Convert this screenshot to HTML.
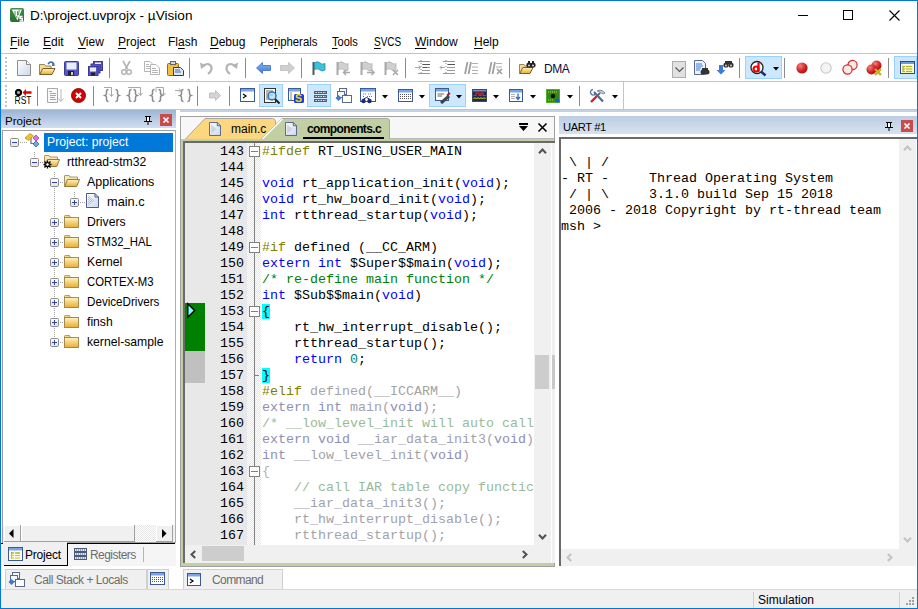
<!DOCTYPE html>
<html><head><meta charset="utf-8">
<style>
*{margin:0;padding:0;box-sizing:border-box}
html,body{width:918px;height:609px;overflow:hidden;background:#fff}
body{position:relative;font-family:"Liberation Sans",sans-serif;font-size:12px;color:#000}
.a{position:absolute}
.t{position:absolute;white-space:pre;line-height:14px}
.mono{font-family:"Liberation Mono",monospace;font-size:13.33px}
.u{text-decoration:underline;text-underline-offset:2px}
svg{position:absolute;overflow:visible}
</style></head><body>
<!-- window border -->
<div class="a" style="left:0;top:0;width:918px;height:609px;border:1px solid #0078d7;z-index:50;pointer-events:none"></div>

<!-- TITLE BAR -->
<div id="title">
  <svg style="left:10px;top:8px" width="14" height="14"><defs><linearGradient id="gic" x1="0" y1="0" x2="0" y2="1"><stop offset="0" stop-color="#3f8f48"/><stop offset="1" stop-color="#24702f"/></linearGradient></defs><rect x="0" y="0" width="14" height="14" rx="2" fill="url(#gic)"/><path d="M1.8 1.5H11.8L7.5 12.5Z" fill="#fff"/><path d="M5 3V8M7.5 3V7.5M6 8.5L7.5 9.5" stroke="#5a9a62" stroke-width="1.1"/><path d="M9.3 1.5L8.5 7" stroke="#4a8c52" stroke-width="0.9"/><path d="M12.5 8.5H10V10.5H12.2V13H9.6" fill="none" stroke="#fff" stroke-width="1.5"/></svg>
  <div class="t" style="left:30px;top:9px;font-size:13.6px">D:\project.uvprojx - µVision</div>
  <!-- min -->
  <div class="a" style="left:798px;top:15px;width:10px;height:1px;background:#000"></div>
  <div class="a" style="left:843px;top:10px;width:10px;height:10px;border:1px solid #000"></div>
  <svg style="left:889px;top:10px" width="11" height="11"><path d="M0.5 0.5L10.5 10.5M10.5 0.5L0.5 10.5" stroke="#000" stroke-width="1.1"/></svg>
</div>

<!-- MENU -->
<div id="menu">
  <div class="t" style="left:10px;top:35px"><span class="u">F</span>ile</div>
  <div class="t" style="left:43px;top:35px"><span class="u">E</span>dit</div>
  <div class="t" style="left:78px;top:35px"><span class="u">V</span>iew</div>
  <div class="t" style="left:118px;top:35px"><span class="u">P</span>roject</div>
  <div class="t" style="left:168px;top:35px">Fl<span class="u">a</span>sh</div>
  <div class="t" style="left:210px;top:35px"><span class="u">D</span>ebug</div>
  <div class="t" style="left:260px;top:35px;transform:scaleX(0.945);transform-origin:0 0">Pe<span class="u">r</span>ipherals</div>
  <div class="t" style="left:332px;top:35px;transform:scaleX(0.92);transform-origin:0 0"><span class="u">T</span>ools</div>
  <div class="t" style="left:374px;top:35px;transform:scaleX(0.83);transform-origin:0 0"><span class="u">S</span>VCS</div>
  <div class="t" style="left:415px;top:35px"><span class="u">W</span>indow</div>
  <div class="t" style="left:474px;top:35px"><span class="u">H</span>elp</div>
</div>

<!-- toolbar lines -->
<div class="a" style="left:0;top:53px;width:918px;height:1px;background:#c4c4c4"></div>
<div class="a" style="left:0;top:81px;width:918px;height:1px;background:#c4c4c4"></div>
<div class="a" style="left:623px;top:81px;width:1px;height:28px;background:#c4c4c4"></div>
<div class="a" style="left:0;top:109px;width:918px;height:1px;background:#c4c4c4"></div>

<!-- TB START -->
<div id="tb">
<div class="a" style="left:5px;top:57px;width:2px;height:2px;background:#c4c4c4"></div><div class="a" style="left:5px;top:61px;width:2px;height:2px;background:#c4c4c4"></div><div class="a" style="left:5px;top:65px;width:2px;height:2px;background:#c4c4c4"></div><div class="a" style="left:5px;top:69px;width:2px;height:2px;background:#c4c4c4"></div><div class="a" style="left:5px;top:73px;width:2px;height:2px;background:#c4c4c4"></div><div class="a" style="left:5px;top:77px;width:2px;height:2px;background:#c4c4c4"></div>
<div class="a" style="left:5px;top:85px;width:2px;height:2px;background:#c4c4c4"></div><div class="a" style="left:5px;top:89px;width:2px;height:2px;background:#c4c4c4"></div><div class="a" style="left:5px;top:93px;width:2px;height:2px;background:#c4c4c4"></div><div class="a" style="left:5px;top:97px;width:2px;height:2px;background:#c4c4c4"></div><div class="a" style="left:5px;top:101px;width:2px;height:2px;background:#c4c4c4"></div><div class="a" style="left:5px;top:105px;width:2px;height:2px;background:#c4c4c4"></div>
<svg style="left:17px;top:60px" width="14" height="16"><defs><linearGradient id="gpage" x1="0" y1="0" x2="1" y2="1"><stop offset="0" stop-color="#ffffff"/><stop offset="1" stop-color="#cdd6ee"/></linearGradient></defs><path d="M0.5 0.5H9.5L13.5 4.5V15.5H0.5Z" fill="url(#gpage)" stroke="#8c8c8c"/><path d="M9.5 0.5V4.5H13.5" fill="#fff" stroke="#8c8c8c"/></svg>
<svg style="left:39px;top:61px" width="17" height="15"><path d="M0.5 13.5V3.5H5.5L6.5 5H12V8" fill="#f3dc98" stroke="#9c8655"/><path d="M0.8 13.5L3.8 7.5H16L13 13.5Z" fill="url(#gfold)" stroke="#7b5f25"/><path d="M9 3Q12 -1 15 3" fill="none" stroke="#3469b5" stroke-width="1.5"/><path d="M13.5 1.5L16.5 4.5L13 5Z" fill="#3469b5"/></svg>
<svg style="left:64px;top:61px" width="15" height="15"><rect x="0.5" y="0.5" width="14" height="14" rx="1" fill="#5657c4" stroke="#3a3b96"/><rect x="2.5" y="1.5" width="10" height="7" fill="#e8eefa"/><rect x="4" y="10" width="6" height="4.5" fill="#222"/><rect x="7" y="11" width="2" height="3" fill="#ccc"/></svg>
<svg style="left:88px;top:61px" width="15" height="15"><rect x="5.5" y="0.5" width="9" height="9" fill="#5657c4" stroke="#3a3b96"/><rect x="3" y="3" width="9" height="9" fill="#5657c4" stroke="#3a3b96"/><rect x="0.5" y="5.5" width="9.5" height="9" fill="#5657c4" stroke="#3a3b96"/><rect x="2" y="6.5" width="6" height="4" fill="#e8eefa"/><rect x="3" y="11.5" width="4" height="3" fill="#222"/><rect x="7" y="1.5" width="6" height="1.5" fill="#e8eefa"/></svg>
<div class="a" style="left:109px;top:58px;width:1px;height:20px;background:#8c8c8c"></div>
<svg style="left:121px;top:61px" width="11" height="14"><path d="M2 0L6.5 8M9 0L4.5 8" stroke="#b4b4b4" stroke-width="1.6"/><circle cx="3" cy="11" r="2.3" fill="none" stroke="#b4b4b4" stroke-width="1.5"/><circle cx="8" cy="11" r="2.3" fill="none" stroke="#b4b4b4" stroke-width="1.5"/></svg>
<svg style="left:144px;top:61px" width="16" height="14"><path d="M0.5 0.5H6L8.5 3V10.5H0.5Z" fill="#fff" stroke="#b4b4b4"/><path d="M6.5 3.5H12L15.5 7V13.5H6.5Z" fill="#fff" stroke="#b4b4b4"/><path d="M2 3.5H5M2 5.5H6M2 7.5H6M8 7.5H12M8 9.5H14M8 11.5H14" stroke="#b4b4b4"/></svg>
<svg style="left:167px;top:61px" width="17" height="15"><rect x="0.5" y="2.5" width="11" height="12" rx="1" fill="#f0c040" stroke="#8a6a20"/><rect x="3.5" y="0.5" width="5" height="3" fill="#d8d8d8" stroke="#666"/><path d="M6.5 6.5H13.5L16.5 9.5V14.5H6.5Z" fill="#dfe6f3" stroke="#2d3c5c"/><path d="M8 9H13M8 11H14" stroke="#4a6aa8"/></svg>
<div class="a" style="left:189px;top:58px;width:1px;height:20px;background:#8c8c8c"></div>
<svg style="left:200px;top:61px" width="14" height="14"><path d="M3 5Q8 1 11 5Q13 9 8 13" fill="none" stroke="#b4b4b4" stroke-width="2.2"/><path d="M0 1.5L6 4.5L1 8Z" fill="#b4b4b4"/></svg>
<svg style="left:225px;top:61px" width="14" height="14"><path d="M10 5Q5 1 2 5Q0 9 5 13" fill="none" stroke="#b4b4b4" stroke-width="2.2"/><path d="M13 1.5L7 4.5L12 8Z" fill="#b4b4b4"/></svg>
<div class="a" style="left:245px;top:58px;width:1px;height:20px;background:#8c8c8c"></div>
<svg style="left:256px;top:62px" width="15" height="12"><defs><linearGradient id="gba" x1="0" y1="0" x2="0" y2="1"><stop offset="0" stop-color="#8ab4f2"/><stop offset="1" stop-color="#3c78d8"/></linearGradient></defs><path d="M0.5 6L6.5 0.5V3.5H14.5V8.5H6.5V11.5Z" fill="url(#gba)" stroke="#3a6fc8" stroke-width="0.8"/></svg>
<svg style="left:280px;top:62px" width="15" height="12"><path d="M14.5 6L8.5 0.5V3.5H0.5V8.5H8.5V11.5Z" fill="#cfcfcf" stroke="#bdbdbd" stroke-width="0.8"/></svg>
<div class="a" style="left:301px;top:58px;width:1px;height:20px;background:#8c8c8c"></div>
<svg style="left:312px;top:61px" width="14" height="15"><path d="M1.5 1V14" stroke="#555" stroke-width="2"/><path d="M2.5 1.5Q6 0 8 2Q10 4 13 2.5V9Q10 11 8 9Q6 7 2.5 8.5Z" fill="#3ec0d8" stroke="#1f8ea8" stroke-width="0.8"/></svg>
<svg style="left:336px;top:61px" width="16" height="15"><path d="M1.5 1V14" stroke="#a8a8a8" stroke-width="2"/><path d="M2.5 1.5Q6 0 8 2Q10 4 12 2.5V9Q10 11 8 9Q6 7 2.5 8.5Z" fill="#cfcfcf" stroke="#b0b0b0" stroke-width="0.8"/><path d="M14 11.5H8M10 9L7.5 11.5L10 14" fill="none" stroke="#a8a8a8" stroke-width="1.5"/></svg>
<svg style="left:360px;top:61px" width="16" height="15"><path d="M1.5 1V14" stroke="#a8a8a8" stroke-width="2"/><path d="M2.5 1.5Q6 0 8 2Q10 4 12 2.5V9Q10 11 8 9Q6 7 2.5 8.5Z" fill="#cfcfcf" stroke="#b0b0b0" stroke-width="0.8"/><path d="M7 11.5H14M11.5 9L14 11.5L11.5 14" fill="none" stroke="#a8a8a8" stroke-width="1.5"/></svg>
<svg style="left:384px;top:61px" width="16" height="15"><path d="M1.5 1V14" stroke="#a8a8a8" stroke-width="2"/><path d="M2.5 1.5Q6 0 8 2Q10 4 12 2.5V9Q10 11 8 9Q6 7 2.5 8.5Z" fill="#cfcfcf" stroke="#b0b0b0" stroke-width="0.8"/><path d="M9 9L14 14M14 9L9 14" stroke="#a8a8a8" stroke-width="1.5"/></svg>
<div class="a" style="left:405px;top:58px;width:1px;height:20px;background:#8c8c8c"></div>
<svg style="left:415px;top:60px" width="17" height="15"><path d="M3 1.5H15M7 4.5H15M7 7.5H15M7 10.5H15M3 13.5H15" stroke="#9a9a9a" stroke-width="1"/><path d="M8 4H15V5H8Z M8 7H12V8H8Z" fill="#555"/><path d="M0 7.5H5M3.5 5.5L5.5 7.5L3.5 9.5" fill="none" stroke="#aaa" stroke-width="1"/><path d="M6 0V15" stroke="#888" stroke-dasharray="1 2"/></svg>
<svg style="left:440px;top:60px" width="17" height="15"><path d="M3 1.5H15M7 4.5H15M7 7.5H15M7 10.5H15M3 13.5H15" stroke="#9a9a9a" stroke-width="1"/><path d="M8 4H15V5H8Z" fill="#555"/><path d="M5 7.5H0M2 5.5L0 7.5L2 9.5" fill="none" stroke="#aaa" stroke-width="1"/><path d="M6 0V15" stroke="#888" stroke-dasharray="1 2"/></svg>
<svg style="left:464px;top:61px" width="15" height="14"><path d="M3.5 1L1 13M7 1L4.5 13" stroke="#a0a0a0" stroke-width="1.8"/><path d="M8 2.5H14M8 6H14M8 9.5H14M8 12.5H14" stroke="#b0b0b0" stroke-width="1"/></svg>
<svg style="left:488px;top:61px" width="15" height="14"><path d="M3.5 1L1 13M7 1L4.5 13" stroke="#a0a0a0" stroke-width="1.8"/><path d="M8 2.5H14M8 6H14" stroke="#b0b0b0" stroke-width="1"/><path d="M9 8L14 13M14 8L9 13" stroke="#a0a0a0" stroke-width="1.6"/></svg>
<div class="a" style="left:509px;top:58px;width:1px;height:20px;background:#8c8c8c"></div>
<svg style="left:519px;top:61px" width="17" height="14"><path d="M0.5 12.5V3.5H5L6 5H11V8" fill="#f3dc98" stroke="#9c8655"/><path d="M0.8 12.5L3.8 6.5H14L11 12.5Z" fill="url(#gfold)" stroke="#7b5f25"/><circle cx="10" cy="4" r="2.6" fill="#222"/><circle cx="14" cy="4" r="2.6" fill="#222"/><rect x="9" y="0" width="2" height="3" fill="#222"/><rect x="13" y="0" width="2" height="3" fill="#222"/><circle cx="10" cy="4.5" r="1" fill="#ddd"/><circle cx="14" cy="4.5" r="1" fill="#ddd"/></svg>
<div class="t" style="left:544px;top:62px;color:#0c0c3c;letter-spacing:-0.4px">DMA</div>
<div class="a" style="left:672px;top:61px;width:14px;height:17px;background:#e1e1e1;border:1px solid #adadad"></div>
<svg style="left:675px;top:67px" width="9" height="5"><path d="M0.5 0.5L4.5 4.5L8.5 0.5" fill="none" stroke="#555" stroke-width="1.1"/></svg>
<svg style="left:694px;top:60px" width="16" height="15"><path d="M0.5 0.5H8.5L11.5 3.5V14.5H0.5Z" fill="#eef2fa" stroke="#566a90"/><path d="M2 4H8M2 6H9M2 8H7M2 10H6" stroke="#3a7ad8" stroke-width="1.2"/><circle cx="9" cy="12" r="2.5" fill="#333"/><circle cx="13" cy="12" r="2.5" fill="#333"/><rect x="8" y="8" width="6" height="3" fill="#333"/></svg>
<svg style="left:717px;top:60px" width="16" height="15"><path d="M2 5H6V10H8.5L4 14.5L-0.5 10H2Z" fill="#3a7ad8"/><circle cx="9" cy="5" r="2.6" fill="#333"/><circle cx="14" cy="5" r="2.6" fill="#333"/><rect x="8" y="1" width="7" height="3" fill="#333"/><circle cx="9" cy="5.5" r="1" fill="#ccc"/><circle cx="14" cy="5.5" r="1" fill="#ccc"/></svg>
<div class="a" style="left:739px;top:58px;width:1px;height:20px;background:#8c8c8c"></div>
<div class="a" style="left:745px;top:56px;width:37px;height:23px;background:#cce8ff;border:1px solid #99d1ff"></div>
<svg style="left:750px;top:61px" width="17" height="15"><circle cx="7" cy="6.5" r="6" fill="#fff" stroke="#222" stroke-width="1.3"/><path d="M11 10.5L15.5 14.5" stroke="#1a2a7a" stroke-width="2.4"/><path d="M8.5 1.5V11" stroke="#f00000" stroke-width="2.2"/><circle cx="6" cy="8" r="2.5" fill="none" stroke="#f00000" stroke-width="2.2"/></svg>
<svg style="left:773px;top:67px" width="6" height="4"><path d="M0 0H6L3 3.5Z" fill="#000"/></svg>
<div class="a" style="left:784px;top:58px;width:1px;height:20px;background:#8c8c8c"></div>
<svg style="left:796px;top:62px" width="12" height="12"><defs><radialGradient id="grd" cx="0.35" cy="0.3" r="0.8"><stop offset="0" stop-color="#f08080"/><stop offset="0.6" stop-color="#d02020"/><stop offset="1" stop-color="#a01010"/></radialGradient></defs><circle cx="6" cy="6" r="5.6" fill="url(#grd)"/></svg>
<svg style="left:820px;top:62px" width="12" height="12"><circle cx="6" cy="6" r="5.2" fill="#f4f4f4" stroke="#c8c8c8" stroke-width="1.1"/></svg>
<svg style="left:842px;top:60px" width="16" height="15"><circle cx="10.5" cy="5" r="4.6" fill="#fde8e8" stroke="#d42a2a" stroke-width="1.2"/><circle cx="5.5" cy="9.5" r="4.6" fill="#fde8e8" stroke="#d42a2a" stroke-width="1.2"/></svg>
<svg style="left:866px;top:60px" width="17" height="16"><circle cx="10.5" cy="5.5" r="5" fill="url(#grd)"/><circle cx="5.5" cy="9.5" r="5" fill="url(#grd)"/><path d="M9 9L15 15M15 9L9 15" stroke="#c8b020" stroke-width="2.4"/></svg>
<div class="a" style="left:888px;top:58px;width:1px;height:20px;background:#8c8c8c"></div>
<div class="a" style="left:894px;top:56px;width:23px;height:23px;background:#cce8ff;border:1px solid #99d1ff"></div>
<svg style="left:900px;top:61px" width="15" height="13"><rect x="0.5" y="0.5" width="14" height="12" fill="#fff" stroke="#2d4a8a"/><rect x="1" y="1" width="13" height="2" fill="#6f9ae0"/><path d="M3 5V11M3 5.5H5M3 8H5M3 10.5H5M6 5.5H12M6 8H12M6 10.5H12" stroke="#707000" stroke-width="1.2"/><rect x="2" y="4" width="11" height="8" fill="#eef060" opacity="0.5"/></svg>
<svg style="left:14px;top:88px" width="18" height="16"><path d="M1 3L3 1H6L8 3V6L6 8H3L1 6Z" fill="#000"/><rect x="3.2" y="3.2" width="2.6" height="2.6" fill="#bbb"/><path d="M8.5 4.5L12 1V3.3H17.5V5.7H12V8Z" fill="#e00000"/><text x="0.5" y="15.5" font-family="Liberation Sans" font-size="10.5" fill="#000" textLength="17" lengthAdjust="spacingAndGlyphs">RST</text></svg>
<div class="a" style="left:37px;top:86px;width:1px;height:20px;background:#8c8c8c"></div>
<svg style="left:47px;top:88px" width="17" height="15"><path d="M0.5 0.5H10.5V14.5H0.5Z" fill="#fafafa" stroke="#a8a8a8"/><path d="M2 3.5H5M3 5.5H9M3 7.5H9M3 9.5H8M3 11.5H9" stroke="#a6a6a6" stroke-width="1"/><path d="M14 1V13M11.5 10.5L14 13.5L16.5 10.5" fill="none" stroke="#b8b8b8" stroke-width="1"/></svg>
<svg style="left:71px;top:88px" width="15" height="15"><circle cx="7.5" cy="7.5" r="7" fill="#d80000" stroke="#600" stroke-width="0.8"/><path d="M5 5L10 10M10 5L5 10" stroke="#fff" stroke-width="2"/></svg>
<div class="a" style="left:93px;top:86px;width:1px;height:20px;background:#8c8c8c"></div>
<svg style="left:104px;top:87px" width="16" height="15"><path transform="translate(1 2)" d="M3.5 0.5Q1.5 0.5 1.5 2.5V4.8Q1.5 6 0 6.5Q1.5 7 1.5 8.2V10.5Q1.5 12.5 3.5 12.5" fill="none" stroke="#8c8c8c" stroke-width="1.5"/><path transform="translate(11 2)" d="M0.5 0.5Q2.5 0.5 2.5 2.5V4.8Q2.5 6 4 6.5Q2.5 7 2.5 8.2V10.5Q2.5 12.5 0.5 12.5" fill="none" stroke="#8c8c8c" stroke-width="1.5"/><path d="M0 0.5H7.5V9M5.5 7L7.5 9.5L9.5 7" fill="none" stroke="#a8a8a8" stroke-width="1"/></svg>
<svg style="left:127px;top:87px" width="17" height="15"><path transform="translate(1 2)" d="M3.5 0.5Q1.5 0.5 1.5 2.5V4.8Q1.5 6 0 6.5Q1.5 7 1.5 8.2V10.5Q1.5 12.5 3.5 12.5" fill="none" stroke="#8c8c8c" stroke-width="1.5"/><path transform="translate(6 2)" d="M0.5 0.5Q2.5 0.5 2.5 2.5V4.8Q2.5 6 4 6.5Q2.5 7 2.5 8.2V10.5Q2.5 12.5 0.5 12.5" fill="none" stroke="#8c8c8c" stroke-width="1.5"/><path d="M1 0.5H13.5V8M11.5 6L13.5 8.5L15.5 6" fill="none" stroke="#a8a8a8" stroke-width="1"/></svg>
<svg style="left:151px;top:87px" width="17" height="15"><path transform="translate(0 2)" d="M3.5 0.5Q1.5 0.5 1.5 2.5V4.8Q1.5 6 0 6.5Q1.5 7 1.5 8.2V10.5Q1.5 12.5 3.5 12.5" fill="none" stroke="#8c8c8c" stroke-width="1.5"/><path transform="translate(7 2)" d="M0.5 0.5Q2.5 0.5 2.5 2.5V4.8Q2.5 6 4 6.5Q2.5 7 2.5 8.2V10.5Q2.5 12.5 0.5 12.5" fill="none" stroke="#8c8c8c" stroke-width="1.5"/><path d="M5 5V0.5H12.5V8M10.5 6L12.5 8.5L14.5 6" fill="none" stroke="#a8a8a8" stroke-width="1"/></svg>
<svg style="left:175px;top:87px" width="16" height="15"><path transform="translate(5 2)" d="M3.5 0.5Q1.5 0.5 1.5 2.5V4.8Q1.5 6 0 6.5Q1.5 7 1.5 8.2V10.5Q1.5 12.5 3.5 12.5" fill="none" stroke="#8c8c8c" stroke-width="1.5"/><path transform="translate(12 2)" d="M0.5 0.5Q2.5 0.5 2.5 2.5V4.8Q2.5 6 4 6.5Q2.5 7 2.5 8.2V10.5Q2.5 12.5 0.5 12.5" fill="none" stroke="#8c8c8c" stroke-width="1.5"/><path d="M0 3.5H6M4 1.5L6 3.5L4 5.5" fill="none" stroke="#a8a8a8" stroke-width="1"/></svg>
<div class="a" style="left:197px;top:86px;width:1px;height:20px;background:#8c8c8c"></div>
<svg style="left:209px;top:90px" width="12" height="11"><path d="M11.5 5.5L6.5 0.5V3H0.5V8H6.5V10.5Z" fill="#d4d4d4" stroke="#b8b8b8" stroke-width="0.8"/></svg>
<div class="a" style="left:229px;top:86px;width:1px;height:20px;background:#8c8c8c"></div>
<svg style="left:240px;top:88px" width="15" height="14"><rect x="0.5" y="0.5" width="14" height="13" fill="#fff" stroke="#3a5a96"/><rect x="1" y="1" width="13" height="2.5" fill="#7aa4e8"/><path d="M3 6L6 8L3 10" fill="none" stroke="#000" stroke-width="1.2"/></svg>
<div class="a" style="left:259px;top:84px;width:24px;height:23px;background:#cce8ff;border:1px solid #99d1ff"></div>
<svg style="left:264px;top:88px" width="17" height="17"><rect x="0.5" y="0.5" width="11" height="14" fill="#f8f8f8" stroke="#333"/><path d="M2 3H9M2 5H6M2 7H9M2 9H6M2 11H9" stroke="#666" stroke-width="0.9"/><circle cx="8" cy="8" r="4" fill="#a8d8f0" fill-opacity="0.6" stroke="#2c74b8" stroke-width="1.4"/><path d="M11 11L15.5 15.5" stroke="#222" stroke-width="2"/></svg>
<svg style="left:288px;top:88px" width="16" height="15"><rect x="0.5" y="0.5" width="12" height="12" fill="#fff" stroke="#3a5a96"/><rect x="1" y="1" width="11" height="2.5" fill="#7aa4e8"/><path d="M3 4V12" stroke="#888"/><rect x="6" y="6" width="10" height="9" rx="1.5" fill="#1c3ce0"/><text x="7" y="14.3" font-family="Liberation Sans" font-weight="bold" font-size="10.5" fill="#f0e000">S</text></svg>
<div class="a" style="left:307px;top:84px;width:24px;height:23px;background:#cce8ff;border:1px solid #99d1ff"></div>
<svg style="left:313px;top:91px" width="15" height="12"><rect x="1" y="0" width="13" height="3" fill="#4f5f7c"/><rect x="1" y="4" width="13" height="3" fill="#4f5f7c"/><rect x="1" y="8" width="13" height="3" fill="#4f5f7c"/><path d="M2.5 1.5H13M2.5 5.5H13M2.5 9.5H13" stroke="#dfe6f0" stroke-width="1" stroke-dasharray="1.5 1"/></svg>
<svg style="left:335px;top:88px" width="17" height="16"><rect x="4.5" y="0.5" width="7" height="6" fill="#f4f6fa" stroke="#5a6a8a"/><rect x="2.5" y="3.5" width="7" height="6" fill="#f4f6fa" stroke="#5a6a8a"/><rect x="7.5" y="7.5" width="9" height="7" fill="#fff" stroke="#5a6a8a"/><path d="M0.5 10L3.5 7L6.5 10L3.5 13Z" fill="#3a78d8"/></svg>
<svg style="left:360px;top:88px" width="17" height="16"><rect x="0.5" y="0.5" width="15" height="13" fill="#fff" stroke="#3a5a96"/><rect x="1" y="1" width="14" height="2.5" fill="#7aa4e8"/><path d="M3 6H6M8 6H12M3 8.5H5M7 8.5H12" stroke="#666" stroke-width="0.9" stroke-dasharray="1 1"/><circle cx="3.5" cy="13" r="2.2" fill="#1a2a7a"/><circle cx="9.5" cy="13" r="2.2" fill="#1a2a7a"/><path d="M3.5 11L6.5 9.5L9.5 11" fill="none" stroke="#1a2a7a" stroke-width="1"/></svg>
<svg style="left:382px;top:95px" width="6" height="4"><path d="M0 0H6L3 3.5Z" fill="#000"/></svg>
<svg style="left:398px;top:89px" width="15" height="13"><rect x="0.5" y="0.5" width="14" height="12" fill="#fff" stroke="#3a5a96"/><rect x="1" y="1" width="13" height="2.5" fill="#7aa4e8"/><path d="M2 5.5H13M2 7.5H13M2 9.5H13" stroke="#555" stroke-width="1" stroke-dasharray="1 1"/></svg>
<svg style="left:419px;top:95px" width="6" height="4"><path d="M0 0H6L3 3.5Z" fill="#000"/></svg>
<div class="a" style="left:429px;top:84px;width:37px;height:23px;background:#cce8ff;border:1px solid #99d1ff"></div>
<svg style="left:435px;top:88px" width="16" height="16"><rect x="0.5" y="0.5" width="13" height="12" fill="#fff" stroke="#3a5a96"/><rect x="1" y="1" width="12" height="2.5" fill="#7aa4e8"/><path d="M2.5 6H9M2.5 8H7" stroke="#555" stroke-width="0.9"/><path d="M6 15L14 8" stroke="#444" stroke-width="3"/><path d="M12 7.5L15 5" stroke="#c01818" stroke-width="2"/></svg>
<svg style="left:456px;top:95px" width="6" height="4"><path d="M0 0H6L3 3.5Z" fill="#000"/></svg>
<svg style="left:472px;top:89px" width="15" height="13"><rect x="0.5" y="0.5" width="14" height="12" fill="#1e2a4a" stroke="#3a4a70"/><rect x="1" y="1" width="13" height="1.5" fill="#6f8fc8"/><path d="M1.5 6.5H4V4H7V6.5H9V4H11V6.5H14" fill="none" stroke="#f02020" stroke-width="1.2"/><path d="M1.5 10L3 8.5L4.5 10L6 8.5L7.5 10L9 8.5L10.5 10L12 8.5L13.5 10" fill="none" stroke="#f0e020" stroke-width="1"/></svg>
<svg style="left:493px;top:95px" width="6" height="4"><path d="M0 0H6L3 3.5Z" fill="#000"/></svg>
<svg style="left:509px;top:89px" width="14" height="13"><rect x="0.5" y="0.5" width="13" height="12" fill="#fff" stroke="#3a5a96"/><rect x="1" y="1" width="12" height="2.5" fill="#7aa4e8"/><path d="M2.5 5.5H6M2.5 7.5H6M2.5 9.5H6" stroke="#555" stroke-width="0.9" stroke-dasharray="1 1"/><path d="M9 4.5V10M7 8L9 10.5L11 8" fill="none" stroke="#2c6ad0" stroke-width="1.3"/></svg>
<svg style="left:530px;top:95px" width="6" height="4"><path d="M0 0H6L3 3.5Z" fill="#000"/></svg>
<svg style="left:546px;top:89px" width="14" height="14"><rect x="0" y="0" width="14" height="14" fill="#49b02a"/><rect x="1" y="1" width="12" height="12" fill="#2f8a1a"/><circle cx="7" cy="7" r="2.3" fill="#111"/><path d="M2 3H12M2 11H8" stroke="#c0e040" stroke-width="1" stroke-dasharray="1 1"/><circle cx="11.5" cy="11.5" r="2" fill="#1f58d8"/></svg>
<svg style="left:567px;top:95px" width="6" height="4"><path d="M0 0H6L3 3.5Z" fill="#000"/></svg>
<div class="a" style="left:579px;top:86px;width:1px;height:20px;background:#8c8c8c"></div>
<svg style="left:589px;top:89px" width="18" height="14"><path d="M2 13L9 6" stroke="#d02020" stroke-width="2.4"/><path d="M9 6L11 4" stroke="#666" stroke-width="2"/><path d="M5 3L14 12.5" stroke="#4a6a9a" stroke-width="2.2"/><path d="M4 0.5A2.8 2.8 0 1 0 6.5 5" fill="none" stroke="#5a7aa8" stroke-width="1.4"/><path d="M8 2Q12 -0.5 16 4L14 5L10.5 2.8Z" fill="#c8d4e4" stroke="#6a82a8" stroke-width="0.9"/></svg>
<svg style="left:612px;top:95px" width="6" height="4"><path d="M0 0H6L3 3.5Z" fill="#000"/></svg>
</div>
<!-- TB END -->
<!-- PROJECT PANEL -->
<div id="proj">
<svg width="0" height="0" style="position:absolute">
<defs>
 <linearGradient id="gbox" x1="0" y1="0" x2="0" y2="1"><stop offset="0" stop-color="#ffffff"/><stop offset="0.5" stop-color="#f4f4f4"/><stop offset="0.55" stop-color="#e6e6e6"/><stop offset="1" stop-color="#ececec"/></linearGradient>
 <linearGradient id="gfold" x1="0" y1="0" x2="0" y2="1"><stop offset="0" stop-color="#fff3c4"/><stop offset="1" stop-color="#e9ad2e"/></linearGradient>
 <linearGradient id="gfoldb" x1="0" y1="0" x2="0" y2="1"><stop offset="0" stop-color="#fbeec0"/><stop offset="1" stop-color="#e6d39a"/></linearGradient>
 <linearGradient id="gfile" x1="0" y1="0" x2="1" y2="1"><stop offset="0" stop-color="#ffffff"/><stop offset="1" stop-color="#c9d6ef"/></linearGradient>
 <pattern id="pdot" width="2" height="2" patternUnits="userSpaceOnUse"><rect width="1" height="1" fill="#b8b8b8"/><rect x="1" y="1" width="1" height="1" fill="#b8b8b8"/></pattern>
 <symbol id="bminus" viewBox="0 0 9 9"><rect x="0.5" y="0.5" width="8" height="8" rx="1.2" fill="url(#gbox)" stroke="#8a8a8a"/><path d="M2 4.5H7" stroke="#3447a0" stroke-width="1"/></symbol>
 <symbol id="bplus" viewBox="0 0 9 9"><rect x="0.5" y="0.5" width="8" height="8" rx="1.2" fill="url(#gbox)" stroke="#8a8a8a"/><path d="M2 4.5H7M4.5 2V7" stroke="#3447a0" stroke-width="1"/></symbol>
 <symbol id="fclosed" viewBox="0 0 16 13"><path d="M0.5 2.5V1.2Q0.5 0.5 1.2 0.5H5.5L6.5 2.5Z" fill="#f1d98c" stroke="#a08a55" stroke-width="0.8"/><rect x="0.5" y="2.5" width="14" height="10" fill="url(#gfold)" stroke="#9b8046" stroke-width="0.9"/></symbol>
 <symbol id="fopen" viewBox="0 0 16 12"><path d="M0.5 11.5V1Q0.5 0.5 1 0.5H5L6 2H13.5V5" fill="url(#gfoldb)" stroke="#9d8c63" stroke-width="0.9"/><path d="M0.7 11.5L3.5 4.5H15.5L12.7 11.5Z" fill="url(#gfold)" stroke="#8d6d2c" stroke-width="0.9"/></symbol>
 <symbol id="ffile" viewBox="0 0 13 15"><path d="M0.5 0.5H9L12.5 4V14.5H0.5Z" fill="url(#gfile)" stroke="#4d5d85"/><path d="M9 0.5V4H12.5" fill="none" stroke="#4d5d85"/><path d="M2 2L8 7.5L2 13Z" fill="url(#pdot)"/></symbol>
</defs></svg>

<div class="a" style="left:1px;top:110px;width:175px;height:18px;background:linear-gradient(#9cb5d4,#d2def0)"></div>
<div class="t" style="left:5px;top:114px;font-size:11.6px">Project</div>
<svg style="left:144px;top:116px" width="8" height="9"><path d="M1 0H7V1H6V5H7V6H1V5H2V1H1Z" fill="#000"/><rect x="3" y="1" width="2" height="4" fill="#fff"/><rect x="0" y="5" width="8" height="1" fill="#000"/><rect x="3.5" y="6" width="1" height="3" fill="#000"/></svg>
<div class="a" style="left:160px;top:114px;width:12px;height:12px;background:#c94c4c"></div>
<svg style="left:163px;top:117px" width="6" height="6"><path d="M0.5 0.5L5.5 5.5M5.5 0.5L0.5 5.5" stroke="#fff" stroke-width="1.7"/></svg>
<div class="a" style="left:2px;top:130px;width:174px;height:413px;border:1px solid #a0a0a0;border-right-color:#b0b0b0;background:#fff"></div>
<div class="a" style="left:44px;top:133px;width:129px;height:19px;background:#0078d7"></div>
<div class="t" style="left:47px;top:135px;color:#fff;font-size:12.2px">Project: project</div>
<svg style="left:10px;top:138px" width="9" height="9"><use href="#bminus"/></svg>
<div class="a" style="left:20px;top:142px;width:8px;height:1px;background:repeating-linear-gradient(90deg,#a0a0a0 0 1px,transparent 1px 2px)"></div>
<svg style="left:24px;top:133px" width="16" height="15"><path d="M7 4.5V10.5H11" fill="none" stroke="#5f7393" stroke-width="1.2"/><path d="M1 5L6 0.5L9.5 3L4.5 7.5Z" fill="#f0c030" stroke="#c09010" stroke-width="0.8"/><path d="M9 5L12 2L15 5L12 8Z" fill="#e070e0" stroke="#a040a0" stroke-width="0.8"/><path d="M9 11L12 8L15 11L12 14Z" fill="#70a8f0" stroke="#3060b0" stroke-width="0.8"/></svg>
<div class="a" style="left:34px;top:152px;width:1px;height:6px;background:repeating-linear-gradient(180deg,#a0a0a0 0 1px,transparent 1px 2px)"></div>
<svg style="left:30px;top:158px" width="9" height="9"><use href="#bminus"/></svg>
<div class="a" style="left:40px;top:162px;width:4px;height:1px;background:repeating-linear-gradient(90deg,#a0a0a0 0 1px,transparent 1px 2px)"></div>
<svg style="left:44px;top:155px" width="16" height="12"><use href="#fopen"/></svg>
<svg style="left:43px;top:160px" width="9" height="9"><path d="M4.5 0.5V8.5M0.5 4.5H8.5M1.5 1.5L7.5 7.5M7.5 1.5L1.5 7.5" stroke="#000" stroke-width="1.3"/><circle cx="4.5" cy="4.5" r="1.8" fill="#fff" stroke="#000" stroke-width="1"/></svg>
<div class="t" style="left:67px;top:155px;font-size:12.2px">rtthread-stm32</div>
<div class="a" style="left:54px;top:172px;width:1px;height:166px;background:repeating-linear-gradient(180deg,#a0a0a0 0 1px,transparent 1px 2px)"></div>
<svg style="left:50px;top:178px" width="9" height="9"><use href="#bminus"/></svg>
<div class="a" style="left:60px;top:182px;width:4px;height:1px;background:repeating-linear-gradient(90deg,#a0a0a0 0 1px,transparent 1px 2px)"></div>
<svg style="left:64px;top:175px" width="16" height="12"><use href="#fopen"/></svg>
<div class="t" style="left:87px;top:175px;font-size:12.2px;transform:scaleX(1.025);transform-origin:0 0">Applications</div>
<div class="a" style="left:74px;top:192px;width:1px;height:6px;background:repeating-linear-gradient(180deg,#a0a0a0 0 1px,transparent 1px 2px)"></div>
<svg style="left:70px;top:198px" width="9" height="9"><use href="#bplus"/></svg>
<div class="a" style="left:80px;top:202px;width:6px;height:1px;background:repeating-linear-gradient(90deg,#a0a0a0 0 1px,transparent 1px 2px)"></div>
<svg style="left:86px;top:193px" width="13" height="15"><use href="#ffile"/></svg>
<div class="t" style="left:107px;top:195px;font-size:12.2px;transform:scaleX(1.05);transform-origin:0 0">main.c</div>
<svg style="left:50px;top:218px" width="9" height="9"><use href="#bplus"/></svg>
<div class="a" style="left:60px;top:222px;width:4px;height:1px;background:repeating-linear-gradient(90deg,#a0a0a0 0 1px,transparent 1px 2px)"></div>
<svg style="left:64px;top:215px" width="16" height="13"><use href="#fclosed"/></svg>
<div class="t" style="left:87px;top:215px;font-size:12.2px">Drivers</div>
<svg style="left:50px;top:238px" width="9" height="9"><use href="#bplus"/></svg>
<div class="a" style="left:60px;top:242px;width:4px;height:1px;background:repeating-linear-gradient(90deg,#a0a0a0 0 1px,transparent 1px 2px)"></div>
<svg style="left:64px;top:235px" width="16" height="13"><use href="#fclosed"/></svg>
<div class="t" style="left:87px;top:235px;font-size:12.2px;transform:scaleX(0.93);transform-origin:0 0">STM32_HAL</div>
<svg style="left:50px;top:258px" width="9" height="9"><use href="#bplus"/></svg>
<div class="a" style="left:60px;top:262px;width:4px;height:1px;background:repeating-linear-gradient(90deg,#a0a0a0 0 1px,transparent 1px 2px)"></div>
<svg style="left:64px;top:255px" width="16" height="13"><use href="#fclosed"/></svg>
<div class="t" style="left:87px;top:255px;font-size:12.2px">Kernel</div>
<svg style="left:50px;top:278px" width="9" height="9"><use href="#bplus"/></svg>
<div class="a" style="left:60px;top:282px;width:4px;height:1px;background:repeating-linear-gradient(90deg,#a0a0a0 0 1px,transparent 1px 2px)"></div>
<svg style="left:64px;top:275px" width="16" height="13"><use href="#fclosed"/></svg>
<div class="t" style="left:87px;top:275px;font-size:12.2px;transform:scaleX(0.93);transform-origin:0 0">CORTEX-M3</div>
<svg style="left:50px;top:298px" width="9" height="9"><use href="#bplus"/></svg>
<div class="a" style="left:60px;top:302px;width:4px;height:1px;background:repeating-linear-gradient(90deg,#a0a0a0 0 1px,transparent 1px 2px)"></div>
<svg style="left:64px;top:295px" width="16" height="13"><use href="#fclosed"/></svg>
<div class="t" style="left:87px;top:295px;font-size:12.2px;transform:scaleX(0.955);transform-origin:0 0">DeviceDrivers</div>
<svg style="left:50px;top:318px" width="9" height="9"><use href="#bplus"/></svg>
<div class="a" style="left:60px;top:322px;width:4px;height:1px;background:repeating-linear-gradient(90deg,#a0a0a0 0 1px,transparent 1px 2px)"></div>
<svg style="left:64px;top:315px" width="16" height="13"><use href="#fclosed"/></svg>
<div class="t" style="left:87px;top:315px;font-size:12.2px">finsh</div>
<svg style="left:50px;top:338px" width="9" height="9"><use href="#bplus"/></svg>
<div class="a" style="left:60px;top:342px;width:4px;height:1px;background:repeating-linear-gradient(90deg,#a0a0a0 0 1px,transparent 1px 2px)"></div>
<svg style="left:64px;top:335px" width="16" height="13"><use href="#fclosed"/></svg>
<div class="t" style="left:87px;top:335px;font-size:12.2px">kernel-sample</div>
</div>

<!-- EDITOR -->
<div id="editor">
  <div class="a" style="left:180px;top:110px;width:738px;height:2px;background:#c2d1e3"></div>
  <div class="a" style="left:180px;top:116px;width:375px;height:451px;border:1px solid #a0a0a0;background:#f7f7f7"></div>
  <div class="a" style="left:181px;top:139px;width:373px;height:427px;background:#c2cfa4"></div>
  <div class="a" style="left:183px;top:141px;width:370px;height:422px;border-left:2px solid #6a6a6a;border-top:2px solid #6a6a6a;background:#fff"></div>
  <svg style="left:181px;top:117px" width="373" height="24">
    <path d="M4 22.5L24 1.5H91.5Q93.5 1.5 94.5 4V22.5Z" fill="#fcd77f" stroke="#a8a8a8" stroke-width="1"/>
    <path d="M80 22.5L101 1.5H206.5Q208.5 1.5 208.5 4V22.5Z" fill="#c2cfa4" stroke="#a8a8a8" stroke-width="1"/>
    <path d="M81.5 22L101.5 2" stroke="#ffffff" stroke-width="1.2"/>
    <rect x="0" y="22" width="373" height="2" fill="#c2cfa4"/>
  </svg>
  <div class="a" style="left:390px;top:138px;width:164px;height:1px;background:#b8b8b8"></div>
  <svg style="left:209px;top:122px" width="13" height="14"><use href="#ffile" width="12" height="14"/></svg>
  <div class="t" style="left:231px;top:122px">main.c</div>
  <svg style="left:285px;top:122px" width="13" height="14"><use href="#ffile" width="12" height="14"/></svg>
  <div class="t" style="left:307px;top:122px;font-weight:bold;letter-spacing:-0.6px">components.c</div>
  <div class="a" style="left:303px;top:137px;width:81px;height:2px;background:#000"></div>
  <svg style="left:519px;top:123px" width="9" height="9"><path d="M0 0H9V2H0Z M0 3H9L4.5 8Z" fill="#000"/></svg>
  <svg style="left:538px;top:123px" width="9" height="9"><path d="M0.5 0.5L8.5 8.5M8.5 0.5L0.5 8.5" stroke="#000" stroke-width="1.6"/></svg>
</div>

<div id="code">
<div class="a" style="left:185px;top:143px;width:62px;height:402px;background:#e8e8e8"></div>
<div class="a" style="left:247px;top:143px;width:14px;height:402px;background:repeating-conic-gradient(#e6e6e6 0 25%,#fff 0 50%) 0 0/2px 2px"></div>
<div class="a" style="left:185px;top:303px;width:20px;height:48px;background:#008000"></div>
<div class="a" style="left:185px;top:351px;width:20px;height:32px;background:#c0c0c0"></div>
<svg style="left:187px;top:303px" width="9" height="15"><path d="M0.8 0.8L7.6 7.5L0.8 14.2Z" fill="#80ffff" stroke="#000" stroke-width="1.4"/></svg>
<div class="t mono" style="left:195px;top:144px;width:49px;text-align:right;line-height:16px;color:#000">143
144
145
146
147
148
149
150
151
152
153
154
155
156
157
158
159
160
161
162
163
164
165
166
167</div>
<div class="a" style="left:254px;top:143px;width:1px;height:402px;background:#808080"></div>
<div class="a" style="left:249px;top:146px;width:11px;height:11px;border:1px solid #808080;background:#fff"></div>
<div class="a" style="left:251px;top:151px;width:7px;height:1px;background:#808080"></div>
<div class="a" style="left:249px;top:242px;width:11px;height:11px;border:1px solid #808080;background:#fff"></div>
<div class="a" style="left:251px;top:247px;width:7px;height:1px;background:#808080"></div>
<div class="a" style="left:249px;top:306px;width:11px;height:11px;border:1px solid #808080;background:#fff"></div>
<div class="a" style="left:251px;top:311px;width:7px;height:1px;background:#808080"></div>
<div class="a" style="left:249px;top:466px;width:11px;height:11px;border:1px solid #808080;background:#fff"></div>
<div class="a" style="left:251px;top:471px;width:7px;height:1px;background:#808080"></div>
<div class="a" style="left:254px;top:375px;width:5px;height:1px;background:#808080"></div>
<div class="a" style="left:261px;top:143px;width:273px;height:402px;overflow:hidden;background:#fff">
<div class="t mono" style="left:1px;top:1px;line-height:16px"><span style="color:#808000">#ifdef</span> RT_USING_USER_MAIN

<span style="color:#0000ff">void</span> rt_application_init(<span style="color:#0000ff">void</span>);
<span style="color:#0000ff">void</span> rt_hw_board_init(<span style="color:#0000ff">void</span>);
<span style="color:#0000ff">int</span> rtthread_startup(<span style="color:#0000ff">void</span>);

<span style="color:#808000">#if</span> defined (__CC_ARM)
<span style="color:#0000ff">extern</span> <span style="color:#0000ff">int</span> $Super$$main(<span style="color:#0000ff">void</span>);
<span style="color:#008000">/* re-define main function */</span>
<span style="color:#0000ff">int</span> $Sub$$main(<span style="color:#0000ff">void</span>)
<span style="background:#00ffff">{</span>
    rt_hw_interrupt_disable();
    rtthread_startup();
    <span style="color:#0000ff">return</span> <span style="color:#008080">0</span>;
<span style="background:#00ffff">}</span>
<span style="color:#808000">#elif</span> <span style="color:#a4a4a4">defined(__ICCARM__)</span>
<span style="color:#8e8eb2">extern</span> <span style="color:#8e8eb2">int</span> <span style="color:#a2a2aa">main(</span><span style="color:#8e8eb2">void</span><span style="color:#a2a2aa">);</span>
<span style="color:#98ba98">/* __low_level_init will auto call</span>
<span style="color:#8e8eb2">extern</span> <span style="color:#8e8eb2">void</span> <span style="color:#a2a2aa">__iar_data_init3(</span><span style="color:#8e8eb2">void</span><span style="color:#a2a2aa">)</span>
<span style="color:#8e8eb2">int</span> <span style="color:#a2a2aa">__low_level_init(</span><span style="color:#8e8eb2">void</span><span style="color:#a2a2aa">)</span>
<span style="color:#b4b4a8">{</span>
    <span style="color:#98ba98">// call IAR table copy functic</span>
    <span style="color:#a2a2aa">__iar_data_init3();</span>
    <span style="color:#a2a2aa">rt_hw_interrupt_disable();</span>
    <span style="color:#a2a2aa">rtthread_startup();</span></div>
</div>
<div class="a" style="left:534px;top:143px;width:17px;height:402px;background:#f0f0f0"></div>
<svg style="left:538px;top:148px" width="9" height="6"><path d="M1 5.2L4.5 1.5L8 5.2" fill="none" stroke="#505050" stroke-width="2"/></svg>
<svg style="left:538px;top:534px" width="9" height="6"><path d="M1 0.8L4.5 4.5L8 0.8" fill="none" stroke="#505050" stroke-width="2"/></svg>
<div class="a" style="left:535px;top:355px;width:14px;height:34px;background:#cdcdcd"></div>
<div class="a" style="left:185px;top:545px;width:366px;height:18px;background:#f0f0f0"></div>
<svg style="left:190px;top:550px" width="6" height="9"><path d="M5.2 1L1.5 4.5L5.2 8" fill="none" stroke="#505050" stroke-width="2"/></svg>
<svg style="left:522px;top:550px" width="6" height="9"><path d="M0.8 1L4.5 4.5L0.8 8" fill="none" stroke="#505050" stroke-width="2"/></svg>
<div class="a" style="left:202px;top:546px;width:42px;height:15px;background:#cdcdcd"></div>
<div class="a" style="left:551px;top:143px;width:4px;height:420px;background:#fff"></div><div class="a" style="left:552px;top:143px;width:3px;height:420px;background:#f0f0f0"></div><div class="a" style="left:552px;top:355px;width:3px;height:34px;background:#c8c8c8"></div><div class="a" style="left:552px;top:141px;width:3px;height:2px;background:#6a6a6a"></div>
</div>
<!-- UART -->
<div id="uart">
  <div class="a" style="left:559px;top:116px;width:358px;height:18px;background:linear-gradient(#bccde2,#d6e2f0)"></div>
  <div class="t" style="left:563px;top:120px;font-size:11.2px;letter-spacing:-0.4px">UART #1</div>
  <svg style="left:885px;top:122px" width="8" height="9"><path d="M1 0H7V1H6V5H7V6H1V5H2V1H1Z" fill="#000"/><rect x="3" y="1" width="2" height="4" fill="#fff"/><rect x="0" y="5" width="8" height="1" fill="#000"/><rect x="3.5" y="6" width="1" height="3" fill="#000"/></svg>
  <div class="a" style="left:901px;top:120px;width:12px;height:12px;background:#c94c4c"></div>
  <svg style="left:904px;top:123px" width="6" height="6"><path d="M0.5 0.5L5.5 5.5M5.5 0.5L0.5 5.5" stroke="#fff" stroke-width="1.7"/></svg>
  <div class="a" style="left:559px;top:137px;width:358px;height:429px;border-left:2px solid #6a6a6a;border-top:2px solid #6a6a6a;background:#fff"></div>
  <div class="t mono" style="left:561px;top:139px;line-height:16px">
 \ | /
- RT -     Thread Operating System
 / | \     3.1.0 build Sep 15 2018
 2006 - 2018 Copyright by rt-thread team
msh &gt;</div>
  <div class="a" style="left:899px;top:139px;width:17px;height:427px;background:#f0f0f0"></div>
  <div class="a" style="left:561px;top:549px;width:355px;height:17px;background:#f0f0f0"></div>
  <svg style="left:903px;top:145px" width="9" height="6"><path d="M1 5.2L4.5 1.5L8 5.2" fill="none" stroke="#c2c2c2" stroke-width="2"/></svg>
  <svg style="left:903px;top:537px" width="9" height="6"><path d="M1 0.8L4.5 4.5L8 0.8" fill="none" stroke="#c2c2c2" stroke-width="2"/></svg>
  <svg style="left:566px;top:553px" width="6" height="9"><path d="M5.2 1L1.5 4.5L5.2 8" fill="none" stroke="#c2c2c2" stroke-width="2"/></svg>
  <svg style="left:887px;top:553px" width="6" height="9"><path d="M0.8 1L4.5 4.5L0.8 8" fill="none" stroke="#c2c2c2" stroke-width="2"/></svg>
</div>

<!-- STATUS -->
<div id="bottom">
  <!-- project panel h-scroll -->
  <div class="a" style="left:3px;top:525px;width:172px;height:17px;background:#f0f0f0"></div>
  <div class="a" style="left:4px;top:525px;width:17px;height:17px;background:#f0f0f0;border-right:1px solid #a0a0a0;border-bottom:1px solid #a0a0a0;box-shadow:inset 1px 1px #fff"></div>
  <svg style="left:9px;top:529px" width="5" height="9"><path d="M4.5 0L0 4.5L4.5 9Z" fill="#000"/></svg>
  <div class="a" style="left:21px;top:525px;width:114px;height:17px;background:#f0f0f0;border-right:1px solid #a0a0a0;border-bottom:1px solid #a0a0a0;box-shadow:inset 1px 1px #fff"></div>
  <div class="a" style="left:135px;top:525px;width:21px;height:17px;background:repeating-conic-gradient(#fff 0 25%,#e6e6e6 0 50%) 0 0/2px 2px"></div>
  <div class="a" style="left:156px;top:525px;width:17px;height:17px;background:#f0f0f0;border-right:1px solid #a0a0a0;border-bottom:1px solid #a0a0a0;box-shadow:inset 1px 1px #fff"></div>
  <svg style="left:162px;top:529px" width="5" height="9"><path d="M0 0L4.5 4.5L0 9Z" fill="#000"/></svg>
  <!-- panel tabs -->
  <div class="a" style="left:1px;top:543px;width:175px;height:23px;background:#f5f5f5"></div>
  <div class="a" style="left:3px;top:542px;width:64px;height:24px;background:#f0f0f0"></div>
  <div class="a" style="left:0px;top:543px;width:3px;height:1px;background:#000"></div>
  <div class="a" style="left:67px;top:543px;width:108px;height:1px;background:#000"></div>
  <div class="a" style="left:67px;top:543px;width:1px;height:23px;background:#000"></div>
  <div class="a" style="left:4px;top:565px;width:64px;height:1px;background:#000"></div>
  <svg style="left:8px;top:547px" width="15" height="14"><rect x="0.5" y="0.5" width="14" height="13" fill="#fff" stroke="#3a5a96"/><rect x="1" y="1" width="13" height="2.5" fill="#7aa4e8"/><rect x="2" y="4.5" width="11" height="8" fill="#fbfbe0"/><path d="M3.5 5V12M3.5 6H6M3.5 8.5H6M3.5 11H6M7 6H12M7 8.5H12M7 11H12" stroke="#c8c820" stroke-width="1.1"/><path d="M3 6H6M7 6H12" stroke="#7a7a10" stroke-width="0.6"/></svg>
  <div class="t" style="left:25px;top:548px;font-size:12px;letter-spacing:-0.2px">Project</div>
  <svg style="left:74px;top:548px" width="13" height="12"><rect x="0.5" y="0.5" width="12" height="3" fill="#dfe6f0" stroke="#4a5a78"/><rect x="0.5" y="4.5" width="12" height="3" fill="#dfe6f0" stroke="#4a5a78"/><rect x="0.5" y="8.5" width="12" height="3" fill="#dfe6f0" stroke="#4a5a78"/><path d="M2 2H11M2 6H11M2 10H11" stroke="#4a5a78" stroke-width="1" stroke-dasharray="1 1"/></svg>
  <div class="t" style="left:90px;top:548px;font-size:12px;letter-spacing:-0.55px;color:#6d6d6d">Registers</div>
  <div class="a" style="left:143px;top:547px;width:1px;height:15px;background:#b4b4b4"></div>
  <!-- call stack -->
  <div class="a" style="left:5px;top:569px;width:142px;height:20px;background:#f0f0f0;border:1px solid #cfcfcf;border-bottom:none"></div>
  <svg style="left:8px;top:572px" width="17" height="16"><rect x="4.5" y="0.5" width="7" height="6" fill="#f4f6fa" stroke="#5a6a8a"/><rect x="2.5" y="3.5" width="7" height="6" fill="#f4f6fa" stroke="#5a6a8a"/><rect x="7.5" y="7.5" width="9" height="7" fill="#fff" stroke="#5a6a8a"/><path d="M0.5 10L3.5 7L6.5 10L3.5 13Z" fill="#3a78d8"/></svg>
  <div class="t" style="left:34px;top:573px;font-size:12px;letter-spacing:-0.45px;color:#6d6d6d">Call Stack + Locals</div>
  <div class="a" style="left:147px;top:569px;width:22px;height:20px;background:#f0f0f0;border:1px solid #cfcfcf;border-bottom:none"></div>
  <svg style="left:150px;top:572px" width="15" height="13"><rect x="0.5" y="0.5" width="14" height="12" fill="#fff" stroke="#3a5a96"/><rect x="1" y="1" width="13" height="2.5" fill="#7aa4e8"/><path d="M2 5.5H13M2 7.5H13M2 9.5H13" stroke="#555" stroke-width="1" stroke-dasharray="1 1"/></svg>
  <!-- command tab -->
  <div class="a" style="left:183px;top:569px;width:100px;height:20px;background:#f0f0f0;border:1px solid #cfcfcf;border-bottom:none"></div>
  <svg style="left:187px;top:573px" width="14" height="13"><rect x="0.5" y="0.5" width="13" height="12" fill="#fff" stroke="#3a5a96"/><rect x="1" y="1" width="12" height="2.5" fill="#7aa4e8"/><path d="M3 6L6 8L3 10" fill="none" stroke="#000" stroke-width="1.2"/></svg>
  <div class="t" style="left:212px;top:573px;font-size:12px;letter-spacing:-0.6px;color:#6d6d6d">Command</div>
</div>
<div class="a" style="left:0;top:589px;width:918px;height:20px;background:#f0f0f0;border-top:1px solid #d7d7d7"></div>
<div class="a" style="left:753px;top:592px;width:1px;height:16px;background:#d0d0d0"></div>
<div class="a" style="left:899px;top:592px;width:1px;height:16px;background:#d0d0d0"></div>
<div class="t" style="left:758px;top:593px">Simulation</div>
<svg style="left:906px;top:597px" width="10" height="10"><rect x="6" y="0" width="2" height="2" fill="#a0a0a0"/><rect x="3" y="3" width="2" height="2" fill="#a0a0a0"/><rect x="6" y="3" width="2" height="2" fill="#a0a0a0"/><rect x="0" y="6" width="2" height="2" fill="#a0a0a0"/><rect x="3" y="6" width="2" height="2" fill="#a0a0a0"/><rect x="6" y="6" width="2" height="2" fill="#a0a0a0"/></svg>

</body></html>
